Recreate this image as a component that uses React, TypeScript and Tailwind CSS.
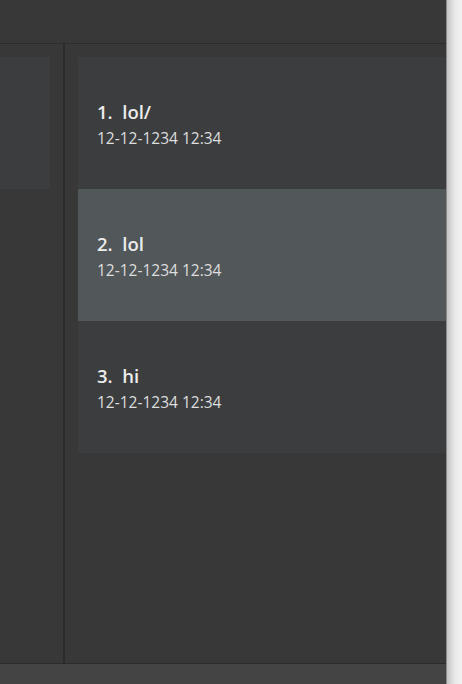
import React from 'react';

const notes = [
    { id: 1, title: 'lol/', date: '12-12-1234 12:34' },
    { id: 2, title: 'lol', date: '12-12-1234 12:34' },
    { id: 3, title: 'hi', date: '12-12-1234 12:34' },
];

const NoteCard: React.FC<{ index: number; title: string; date: string; selected?: boolean }> = ({ index, title, date, selected }) => (
    <div className={`h-[132px] flex flex-col justify-center pl-[19px] pt-[1px] ${selected ? 'bg-[#52575a]' : 'bg-[#3c3d3f]'}`}>
        <div className="text-[18.5px] leading-[24px] font-semibold text-[#ececec] whitespace-pre">{`${index}.  ${title}`}</div>
        <div className="text-[15.5px] leading-[20px] mt-[4px] text-[#dedede]">{date}</div>
    </div>
);

export default function App() {
    return (
        <div className="w-[462px] h-[684px] flex overflow-hidden" style={{ fontFamily: '"Open Sans", "Noto Sans", sans-serif' }}>
            <div className="w-[446px] flex flex-col bg-[#383838]">
                {/* top bar */}
                <div className="h-[44px] shrink-0 bg-[#383838] border-b border-[#2b2b2b]" />

                <div className="flex-1 flex min-h-0">
                    {/* left panel */}
                    <div className="w-[63px] shrink-0 pt-[13px] pr-[13px]">
                        <div className="h-[132px] bg-[#3c3d3f]" />
                    </div>
                    <div className="w-[2px] shrink-0 bg-[#2b2b2b]" />

                    {/* note list */}
                    <div className="flex-1 pt-[13px] pl-[13px]">
                        {notes.map((n, i) => (
                            <NoteCard key={n.id} index={i + 1} title={n.title} date={n.date} selected={i === 1} />
                        ))}
                    </div>
                </div>

                {/* status bar */}
                <div className="h-[21px] shrink-0 bg-[#444444] border-t border-[#2b2b2b]" />
            </div>
            <div className="w-[16px] shrink-0 border-l border-[#8a8a8a] bg-gradient-to-r from-[#c4c4c4] via-[#e8e8e8] to-[#f2f2f2]" />
        </div>
    );
}
